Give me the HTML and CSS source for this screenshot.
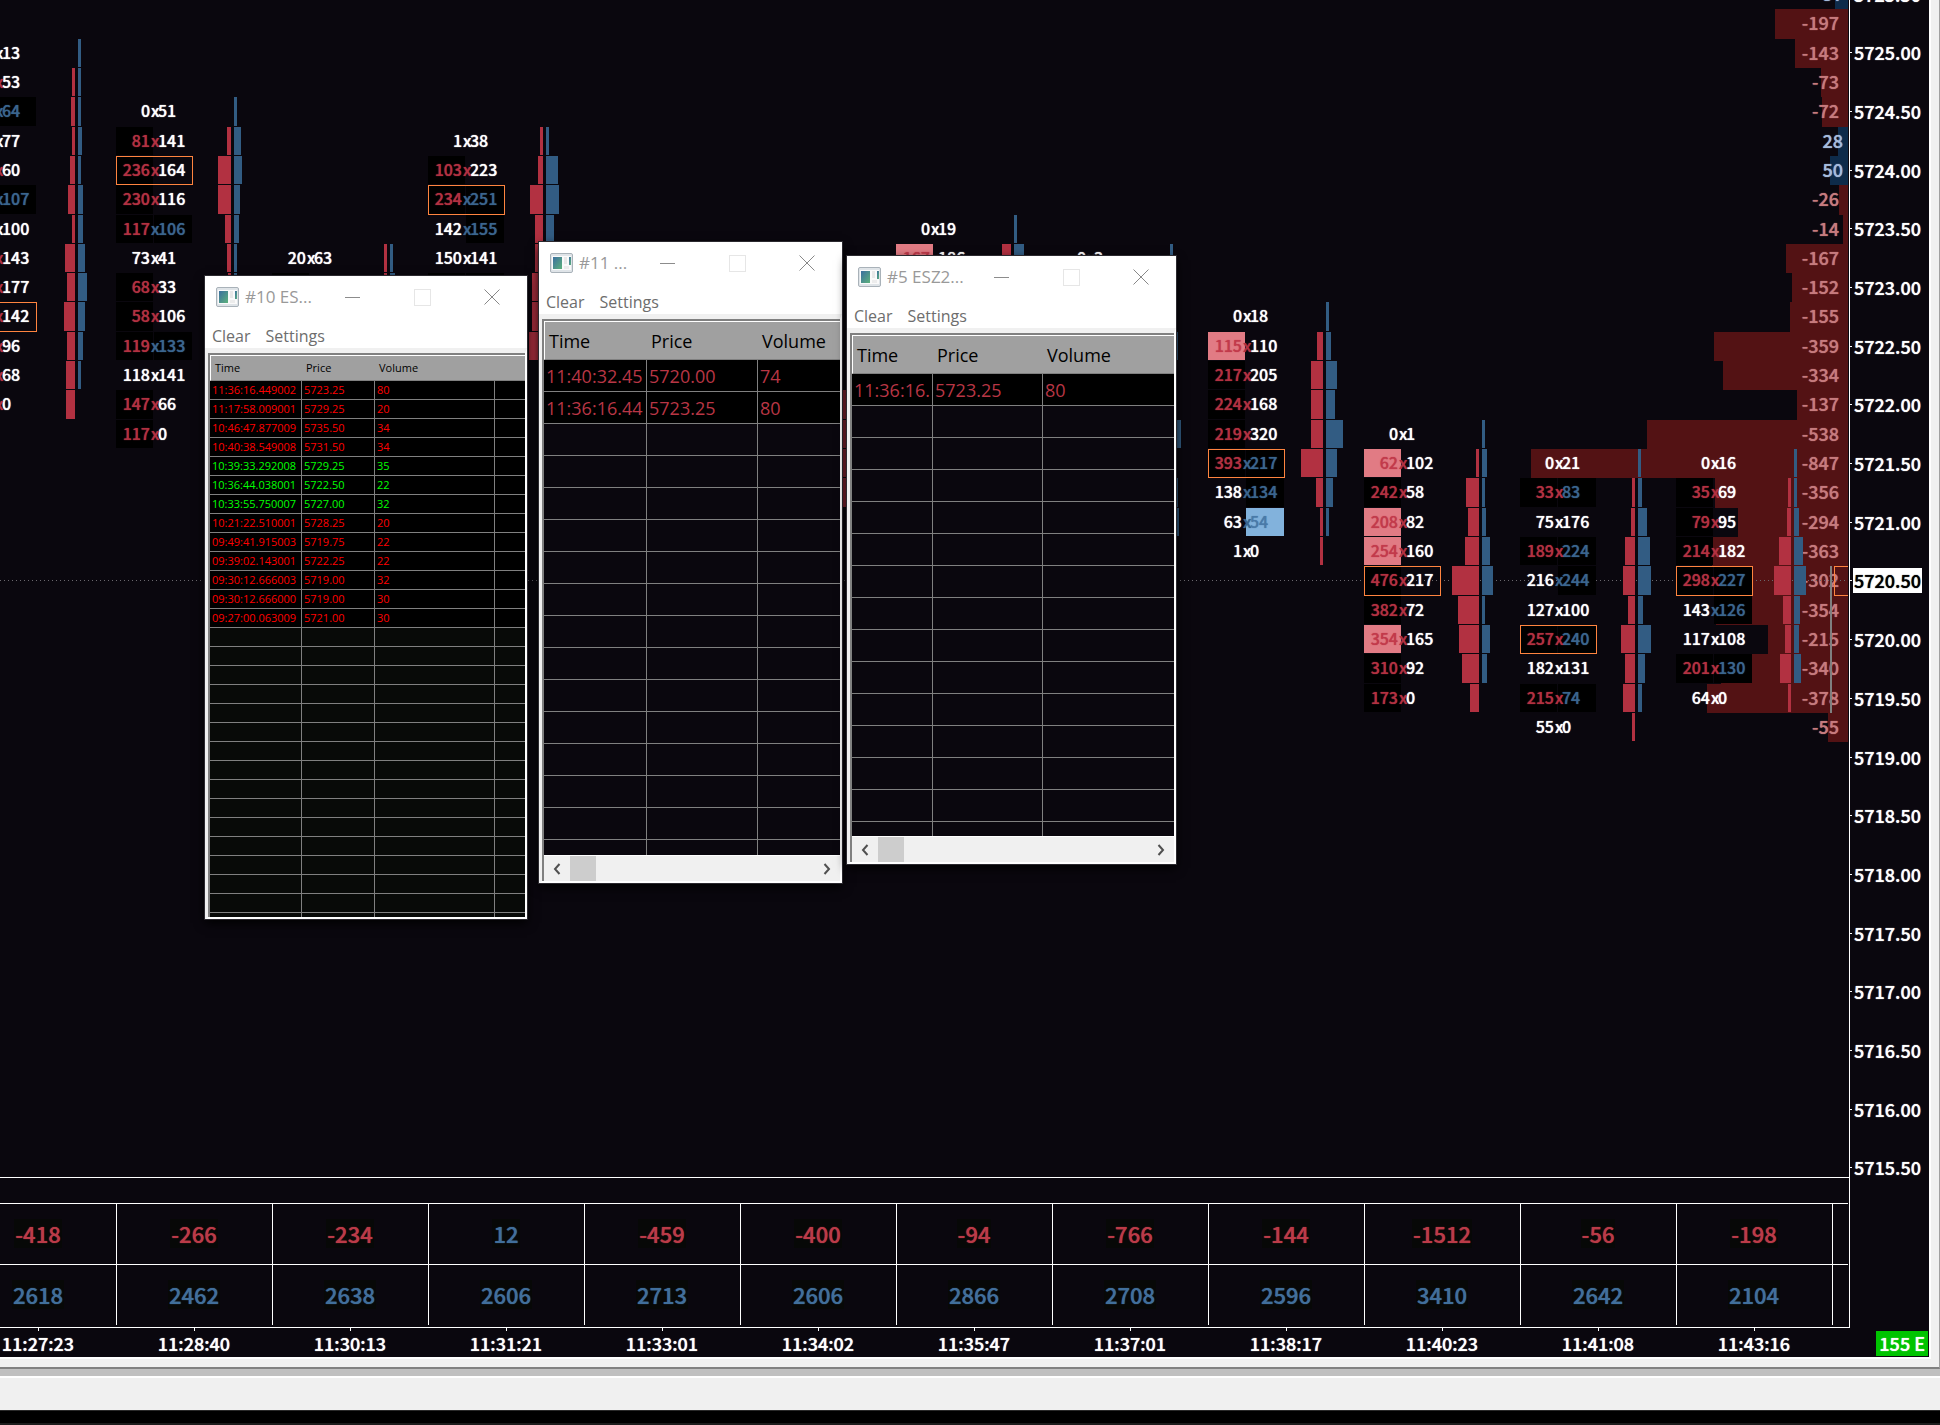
FILE: index.html
```html
<!DOCTYPE html>
<html lang="en">
<head>
<meta charset="utf-8">
<title>ES footprint chart</title>
<link rel="stylesheet" href="styles.css">
</head>
<body>
<main class="workspace">
  <section class="chart">
    <div class="plot">
      <div class="levels profile" id="profile"></div>
      <div class="levels last-price"><span class="last-line"></span></div>
      <div class="clusters" id="clusters"></div>
      <div class="levels current-bar"><span class="current-box"></span><span class="current-range"></span></div>

      <article class="window window-10">
        <header class="titlebar">
          <svg class="app-icon" viewBox="0 0 23 20" aria-hidden="true"><rect x=".5" y=".5" width="22" height="19" rx="1.5" fill="#dfe4e8" stroke="#a9b2b9"/><rect x="2" y="3" width="19" height="14" fill="#fafafa"/><rect x="3" y="4" width="9" height="12" fill="url(#tile)"/><rect x="14" y="4" width="3" height="7" fill="#e8e8e8"/><rect x="19" y="4" width="2" height="8" fill="url(#tile)"/><rect x="14" y="13" width="5" height="3" fill="#ececec"/><defs><linearGradient id="tile" x1="0" y1="0" x2="1" y2="1"><stop stop-color="#3c6fa0"/><stop offset="1" stop-color="#5db27c"/></linearGradient></defs></svg>
          <h2 class="title">#10 ES...</h2>
          <div class="controls">
            <button class="control minimize" aria-label="Minimize"></button>
            <button class="control maximize" aria-label="Maximize" disabled></button>
            <button class="control close" aria-label="Close"><svg viewBox="0 0 16 16" aria-hidden="true"><path d="M.5 .5 15.5 15.5M15.5 .5 .5 15.5"/></svg></button>
          </div>
        </header>
        <nav class="menu"><button>Clear</button><button>Settings</button></nav>
        <div class="sheet">
          <table class="trades small" data-blank="16">
            <colgroup><col class="w92"><col class="w73"><col class="w120"><col></colgroup>
            <thead><tr><th>Time</th><th>Price</th><th>Volume</th><th></th></tr></thead>
            <tbody>
              <tr class="sell"><td>11:36:16.449002</td><td>5723.25</td><td>80</td><td></td></tr>
              <tr class="sell"><td>11:17:58.009001</td><td>5729.25</td><td>20</td><td></td></tr>
              <tr class="sell"><td>10:46:47.877009</td><td>5735.50</td><td>34</td><td></td></tr>
              <tr class="sell"><td>10:40:38.549008</td><td>5731.50</td><td>34</td><td></td></tr>
              <tr class="buy"><td>10:39:33.292008</td><td>5729.25</td><td>35</td><td></td></tr>
              <tr class="buy"><td>10:36:44.038001</td><td>5722.50</td><td>22</td><td></td></tr>
              <tr class="buy"><td>10:33:55.750007</td><td>5727.00</td><td>32</td><td></td></tr>
              <tr class="sell"><td>10:21:22.510001</td><td>5728.25</td><td>20</td><td></td></tr>
              <tr class="sell"><td>09:49:41.915003</td><td>5719.75</td><td>22</td><td></td></tr>
              <tr class="sell"><td>09:39:02.143001</td><td>5722.25</td><td>22</td><td></td></tr>
              <tr class="sell"><td>09:30:12.666003</td><td>5719.00</td><td>32</td><td></td></tr>
              <tr class="sell"><td>09:30:12.666000</td><td>5719.00</td><td>30</td><td></td></tr>
              <tr class="sell"><td>09:27:00.063009</td><td>5721.00</td><td>30</td><td></td></tr>
            </tbody>
          </table>
        </div>
      </article>

      <article class="window window-11">
        <header class="titlebar">
          <svg class="app-icon" viewBox="0 0 23 20" aria-hidden="true"><rect x=".5" y=".5" width="22" height="19" rx="1.5" fill="#dfe4e8" stroke="#a9b2b9"/><rect x="2" y="3" width="19" height="14" fill="#fafafa"/><rect x="3" y="4" width="9" height="12" fill="url(#tile)"/><rect x="14" y="4" width="3" height="7" fill="#e8e8e8"/><rect x="19" y="4" width="2" height="8" fill="url(#tile)"/><rect x="14" y="13" width="5" height="3" fill="#ececec"/></svg>
          <h2 class="title">#11 ...</h2>
          <div class="controls">
            <button class="control minimize" aria-label="Minimize"></button>
            <button class="control maximize" aria-label="Maximize" disabled></button>
            <button class="control close" aria-label="Close"><svg viewBox="0 0 16 16" aria-hidden="true"><path d="M.5 .5 15.5 15.5M15.5 .5 .5 15.5"/></svg></button>
          </div>
        </header>
        <nav class="menu"><button>Clear</button><button>Settings</button></nav>
        <div class="sheet">
          <table class="trades" data-blank="14">
            <colgroup><col class="w103"><col class="w111"><col></colgroup>
            <thead><tr><th>Time</th><th>Price</th><th>Volume</th></tr></thead>
            <tbody>
              <tr class="sell"><td>11:40:32.45</td><td>5720.00</td><td>74</td></tr>
              <tr class="sell"><td>11:36:16.44</td><td>5723.25</td><td>80</td></tr>
            </tbody>
          </table>
          <div class="scrollbar">
            <button class="arrow" aria-label="Scroll left"><svg viewBox="0 0 8 12" aria-hidden="true"><path d="M6.500 1 2 6 6.500 11"/></svg></button>
            <span class="thumb"></span>
            <button class="arrow" aria-label="Scroll right"><svg viewBox="0 0 8 12" aria-hidden="true"><path d="M1.500 1 6 6 1.500 11"/></svg></button>
          </div>
        </div>
      </article>

      <article class="window window-5">
        <header class="titlebar">
          <svg class="app-icon" viewBox="0 0 23 20" aria-hidden="true"><rect x=".5" y=".5" width="22" height="19" rx="1.5" fill="#dfe4e8" stroke="#a9b2b9"/><rect x="2" y="3" width="19" height="14" fill="#fafafa"/><rect x="3" y="4" width="9" height="12" fill="url(#tile)"/><rect x="14" y="4" width="3" height="7" fill="#e8e8e8"/><rect x="19" y="4" width="2" height="8" fill="url(#tile)"/><rect x="14" y="13" width="5" height="3" fill="#ececec"/></svg>
          <h2 class="title">#5 ESZ2...</h2>
          <div class="controls">
            <button class="control minimize" aria-label="Minimize"></button>
            <button class="control maximize" aria-label="Maximize" disabled></button>
            <button class="control close" aria-label="Close"><svg viewBox="0 0 16 16" aria-hidden="true"><path d="M.5 .5 15.5 15.5M15.5 .5 .5 15.5"/></svg></button>
          </div>
        </header>
        <nav class="menu"><button>Clear</button><button>Settings</button></nav>
        <div class="sheet">
          <table class="trades" data-blank="14">
            <colgroup><col class="w81"><col class="w110"><col></colgroup>
            <thead><tr><th>Time</th><th>Price</th><th>Volume</th></tr></thead>
            <tbody>
              <tr class="sell"><td>11:36:16.</td><td>5723.25</td><td>80</td></tr>
            </tbody>
          </table>
          <div class="scrollbar">
            <button class="arrow" aria-label="Scroll left"><svg viewBox="0 0 8 12" aria-hidden="true"><path d="M6.500 1 2 6 6.500 11"/></svg></button>
            <span class="thumb"></span>
            <button class="arrow" aria-label="Scroll right"><svg viewBox="0 0 8 12" aria-hidden="true"><path d="M1.500 1 6 6 1.500 11"/></svg></button>
          </div>
        </div>
      </article>
    </div>

    <div class="axis"><div class="levels prices" id="prices"></div></div>

    <div class="summary">
      <table class="totals">
        <tbody>
          <tr class="delta"><td><span>-418</span></td><td><span>-266</span></td><td><span>-234</span></td><td><span class="up">12</span></td><td><span>-459</span></td><td><span>-400</span></td><td><span>-94</span></td><td><span>-766</span></td><td><span>-144</span></td><td><span>-1512</span></td><td><span>-56</span></td><td><span>-198</span></td><td class="tail"></td></tr>
          <tr class="volume"><td><span>2618</span></td><td><span>2462</span></td><td><span>2638</span></td><td><span>2606</span></td><td><span>2713</span></td><td><span>2606</span></td><td><span>2866</span></td><td><span>2708</span></td><td><span>2596</span></td><td><span>3410</span></td><td><span>2642</span></td><td><span>2104</span></td><td class="tail"></td></tr>
        </tbody>
      </table>
    </div>

    <div class="times">
      <time>11:27:23</time><time>11:28:40</time><time>11:30:13</time><time>11:31:21</time><time>11:33:01</time><time>11:34:02</time><time>11:35:47</time><time>11:37:01</time><time>11:38:17</time><time>11:40:23</time><time>11:41:08</time><time>11:43:16</time>
    </div>
    <div class="corner"><span class="badge">155 E</span></div>
  </section>
</main>
<div class="divider"></div>
<footer class="statusbar"></footer>
<div class="desktop-edge"></div>
<script src="chart.js"></script>
</body>
</html>
```
FILE: styles.css
```css
:root {
  --bg: #0a070e;
  --red: #b23141;
  --blue: #325c83;
  --orange: #ff843f;
  --num: "Noto Sans CJK JP Medium", "Noto Sans CJK JP", "Liberation Sans", sans-serif;
  --ui: "Open Sans", "Noto Sans", sans-serif;
}

* { box-sizing: border-box; }

body {
  margin: 0;
  min-height: 100vh;
  display: flex;
  flex-direction: column;
  background: #000;
  color: #fff;
  font-family: var(--num);
  font-weight: 500;
}

button {
  padding: 0;
  border: 0;
  background: none;
  font: inherit;
  color: inherit;
}

.workspace {
  flex: 1;
  display: flex;
  padding: 0 8px 8px 0;
  background: #f0f0f0;
  border-right: 1px solid #a0a0a0;
  border-bottom: 2px solid #808080;
}

.chart {
  flex: 1;
  min-width: 0;
  display: grid;
  grid-template-columns: minmax(0, 1fr) 79px;
  grid-template-rows: minmax(0, 1fr) 150px 29px;
  background: var(--bg);
  border-right: 2px solid #fff;
  border-bottom: 2px solid #fff;
}

.plot {
  position: relative;
  overflow: hidden;
  border-right: 1px solid #fff;
  border-bottom: 1px solid #fff;
}

/* 41 price levels; the first and last are partly cut by the pane */
.levels {
  position: absolute;
  top: -20px;
  bottom: -5px;
  left: 0;
  right: 1px;
  display: grid;
  grid-template-rows: repeat(41, minmax(0, 1fr));
}

.profile-bar {
  grid-column: 1;
  justify-self: end;
  background: #531214;
}
.profile-bar.up { background: #0e2b4a; }
.profile-value {
  grid-column: 1;
  justify-self: end;
  padding-right: 9px;
  color: #c67b7e;
  font-size: 18px;
  line-height: 27px;
  text-shadow: 0 0 1px currentColor;
}
.profile-value.up { padding-right: 5px; color: #a5bbdc; }

.last-line {
  grid-row: 21;
  align-self: center;
  height: 1px;
  background: repeating-linear-gradient(90deg, #6b686e 0 1px, transparent 1px 4px);
}

.clusters {
  position: absolute;
  top: -20px;
  bottom: -5px;
  left: 0;
  right: 17px;
  display: flex;
  justify-content: flex-end;
}
.cluster {
  flex: none;
  width: 156px;
  display: grid;
  grid-template-rows: repeat(41, minmax(0, 1fr));
}
.level {
  display: grid;
  grid-template-columns: 77px 38px 3px 38px;
}
.pair {
  position: relative;
  display: grid;
  grid-template-columns: 37px 38px;
  column-gap: 1px;
  font-size: 16px;
  line-height: 26px;
  text-shadow: 0 0 1px currentColor;
}
.bid, .ask { height: calc(100% - 1px); white-space: nowrap; }
.bid { padding-right: 3px; text-align: right; }
.ask { padding-left: 4px; }
.by {
  position: absolute;
  left: 35px;
  width: 8px;
  text-align: center;
}
.bid.hot, .by.red { color: var(--red); }
.ask.hot, .by.blue { color: #3a658e; }
.hot { background: #000; }
.bid.imbalance { background: #e17b84; color: #c23a4b; }
.ask.imbalance { background: #82b2dc; color: #4a7aa8; }
.pair.poc { outline: 1px solid var(--orange); outline-offset: -1px; }

.bar { height: calc(100% - 1px); }
.bar.sell { grid-column: 2; justify-self: end; background: var(--red); }
.bar.buy { grid-column: 4; background: var(--blue); }

.current-box {
  grid-row: 21;
  grid-column: 1;
  justify-self: end;
  width: 14px;
  border: 1px solid var(--orange);
  border-right: 0;
}
.current-range {
  grid-row: 21 / span 5;
  grid-column: 1;
  justify-self: end;
  width: 2px;
  margin-right: 16px;
  background: #808080;
}

.axis { position: relative; overflow: hidden; }
.price {
  display: flex;
  align-items: center;
  gap: 1px;
  font-size: 18px;
  line-height: 25px;
  padding-bottom: 1px;
  text-shadow: 0 0 1px currentColor;
}
.price::before { content: ""; width: 2px; height: 1px; background: #fff; }
.price span { padding: 0 1px; }
.price.current span { background: #fff; color: #000; }

.summary {
  grid-column: 1;
  grid-row: 2;
  display: flex;
  justify-content: flex-end;
  overflow: hidden;
  padding: 25px 1px 0 0;
  border-right: 1px solid #fff;
  border-bottom: 1px solid #fff;
}
.totals {
  flex: none;
  width: 1888px;
  height: 122px;
  table-layout: fixed;
  border-collapse: separate;
  border-spacing: 0;
}
.totals td {
  width: 156px;
  height: 61px;
  padding: 0 1px 2px 0;
  border-top: 1px solid #fff;
  border-left: 1px solid #fff;
  text-align: center;
  font-size: 22px;
  line-height: 29px;
  text-shadow: 0 0 1px currentColor;
}
.totals td.tail { width: 16px; }
.totals span { display: inline-block; padding: 0 1px; background: #070807; }
.delta { color: #bb3b48; }
.volume, .delta .up { color: #416f9b; }

.times {
  grid-column: 1;
  grid-row: 3;
  display: flex;
  justify-content: flex-end;
  overflow: hidden;
  padding-right: 18px;
}
.times time {
  flex: none;
  width: 156px;
  display: flex;
  flex-direction: column;
  align-items: center;
  font-size: 18px;
  line-height: 24px;
  text-shadow: 0 0 1px currentColor;
}
.times time::before { content: ""; width: 1px; height: 3px; background: #fff; }

.corner {
  grid-column: 2;
  grid-row: 3;
  display: flex;
  justify-content: flex-end;
  align-items: flex-end;
  padding: 0 1px 1px 0;
}
.badge {
  width: 52px;
  padding-right: 3px;
  background: #00c400;
  font-size: 18px;
  line-height: 25px;
  text-align: right;
  white-space: nowrap;
  text-shadow: 0 0 1px currentColor;
}

/* Floating windows */
.window {
  position: absolute;
  display: flex;
  flex-direction: column;
  background: #fff;
  box-shadow: 0 0 0 1px #2b292f, 0 4px 10px #000;
  font-family: var(--ui);
  font-weight: 400;
}
.window-10 { left: 205px; top: 276px; width: 322px; height: 643px; }
.window-11 { left: 539px; top: 242px; width: 303px; height: 641px; }
.window-5 { left: 847px; top: 256px; width: 329px; height: 608px; }

.titlebar {
  height: 42px;
  display: flex;
  align-items: center;
  padding-left: 11px;
}
.app-icon { flex: none; width: 23px; height: 20px; margin-right: 6px; }
.title {
  flex: 1;
  min-width: 0;
  margin: 0;
  color: #999;
  font-size: 17px;
  font-weight: 400;
  line-height: 24px;
  white-space: nowrap;
}
.controls { flex: none; display: flex; }
.control {
  width: 70px;
  height: 42px;
  display: flex;
  align-items: center;
  justify-content: center;
}
.minimize::before { content: ""; width: 15px; height: 1px; background: #8c8c8c; }
.maximize::before { content: ""; width: 15px; height: 15px; border: 1px solid #e6e6e6; }
.close svg { width: 16px; height: 16px; fill: none; stroke: #888; stroke-width: 1; }

.menu {
  height: 30px;
  display: flex;
  gap: 15px;
  padding: 6px 0 0 7px;
  color: #6d6d6d;
  font-size: 16px;
  line-height: 24px;
}

.sheet {
  flex: 1;
  min-height: 0;
  position: relative;
  overflow: hidden;
  padding: 2px 0 0 2px;
  border: 2px solid #fff;
  border-top: 5px solid #f0f0f0;
  border-left: 3px solid #f0f0f0;
  background: #808080;
}
.trades {
  width: 100%;
  table-layout: fixed;
  border-collapse: separate;
  border-spacing: 0;
  color: #b83645;
  font-size: 18px;
  line-height: 29px;
}
.w73 { width: 73px; }
.w81 { width: 81px; }
.w92 { width: 92px; }
.w103 { width: 103px; }
.w110 { width: 110px; }
.w111 { width: 111px; }
.w120 { width: 120px; }
.trades th {
  height: 39px;
  padding: 2px 0 0 4px;
  border-top: 1px solid #fff;
  border-bottom: 1px solid #808080;
  background: #a0a0a0;
  color: #000;
  font-weight: 400;
  text-align: left;
}
.trades th:first-child { border-left: 1px solid #fff; }
.trades td {
  height: 32px;
  padding: 2px 0 0 2px;
  overflow: hidden;
  border-right: 1px solid #808080;
  border-bottom: 1px solid #808080;
  background: #000;
  white-space: nowrap;
}
.trades td:last-child { border-right: 0; }
.trades .blank td { background: var(--bg); }
.trades.small { font-size: 11px; line-height: 18px; }
.small th { height: 26px; padding-top: 0; }
.small td { height: 19px; padding-top: 0; }
.small .sell { color: #f00; }
.small .buy { color: #0f0; }
.small .blank td { background: #080a08; }

.scrollbar {
  position: absolute;
  left: 2px;
  right: 0;
  bottom: 0;
  height: 26px;
  display: flex;
  background: #f0f0f0;
  border-top: 1px solid #fff;
}
.arrow { width: 26px; display: grid; place-items: center; }
.arrow:last-child { margin-left: auto; }
.arrow svg { width: 8px; height: 12px; fill: none; stroke: #505050; stroke-width: 2; }
.thumb { width: 26px; background: #cdcdcd; }

.divider { height: 9px; background: #c0c0c0; border-bottom: 2px solid #fff; }
.statusbar { height: 32px; background: #f0f0f0; }
.desktop-edge { height: 15px; background: #000; border-top: 1px solid #2a2a2a; border-bottom: 2px solid #1c1c1c; }
```
FILE: chart.js
```js
// Each level is "bid x ask": r/b = highlighted side, p/l = imbalance fill, * = point of control.
const clusters = [
  { top: 2, levels: '0x13 55rx53 75rx64b 55x77 95rx60 130rx107b 60x100 182rx143 145rx177 200rx142* 145rx96 160rx68 160rx0' },
  { top: 4, levels: '0x51 81rx141 236rx164* 230rx116 117rx106b 73x41 68rx33 58rx106 119rx133b 118x141 147rx66 117rx0' },
  { top: 9, levels: '20x63 70rx100' },
  { top: 5, levels: '1x38 103rx223 234rx251b* 142x155b 150x141 200rx160b 200rx120 255rx140' },
  { top: 5, levels: '' },
  { top: 14, levels: '240rx90 240rx90 240rx90 240rx90' },
  { top: 8, levels: '0x19 167px186' },
  { top: 9, levels: '0x3 - - 40x150 - - 40x205 - 40x150 40x170' },
  { top: 11, levels: '0x18 115px110 217rx205 224rx168 219rx320 393rx217b* 138x134b 63x54l 1x0' },
  { top: 15, levels: '0x1 62px102 242rx58 208px82 254px160 476rx217* 382rx72 354px165 310rx92 173rx0' },
  { top: 16, levels: '0x21 33rx83b 75x176 189rx224b 216x244b 127x100 257rx240b* 182x131 215rx74b 55x0' },
  { top: 16, levels: '0x16 35rx69 79rx95 214rx182 298rx227b* 143x126b 117x108 201rx130b 64x0' }
];
const profile = [37, -197, -143, -73, -72, 28, 50, -26, -14, -167, -152, -155, -359, -334,
  -137, -538, -847, -356, -294, -363, -302, -354, -215, -340, -378, -55];

function add(parent, tag, className, text) {
  const node = document.createElement(tag);
  if (className) node.className = className;
  if (text !== undefined) node.textContent = text;
  parent.append(node);
  return node;
}

function addBar(level, side, volume, scale) {
  if (volume > 0) add(level, 'span', 'bar ' + side).style.width = Math.max(3, Math.floor(volume * scale)) + 'px';
}

const clusterRoot = document.getElementById('clusters');
clusters.forEach((cluster, index) => {
  const column = add(clusterRoot, 'div', 'cluster');
  cluster.levels.split(' ').forEach((text, i) => {
    const m = /^(\d+)([rp]?)x(\d+)([bl]?)(\*?)$/.exec(text);
    if (!m) return;
    const [, bid, bidMark, ask, askMark, poc] = m;
    const level = add(column, 'div', 'level');
    level.style.gridRow = cluster.top + i + 1;
    const pair = add(level, 'div', 'pair' + (poc ? ' poc' : ''));
    const mark = m => (m ? ' hot' : '') + (m === 'p' || m === 'l' ? ' imbalance' : '');
    add(pair, 'span', 'bid' + mark(bidMark), bid);
    const tone = askMark && (!bidMark || index < 9) ? ' blue' : bidMark ? ' red' : '';
    add(pair, 'span', 'by' + tone, 'x');
    add(pair, 'span', 'ask' + mark(askMark), ask);
    addBar(level, 'sell', +bid, 0.0571);
    addBar(level, 'buy', +ask, 0.0545);
  });
});

const profileRoot = document.getElementById('profile');
profile.forEach((value, i) => {
  const up = value > 0 ? ' up' : '';
  const bar = add(profileRoot, 'span', 'profile-bar' + up);
  bar.style.gridRow = i + 1;
  bar.style.width = Math.floor(Math.abs(value) * 0.3748) + 'px';
  add(profileRoot, 'span', 'profile-value' + up, value).style.gridRow = i + 1;
});

const priceRoot = document.getElementById('prices');
for (let i = 0; i <= 40; i += 2) {
  const price = (5725.5 - i / 4).toFixed(2);
  const label = add(priceRoot, 'div', 'price' + (price === '5720.50' ? ' current' : ''));
  label.style.gridRow = i + 1;
  add(label, 'span', '', price);
}

document.querySelectorAll('.trades').forEach(table => {
  const columns = table.tHead.rows[0].cells.length;
  for (let i = 0; i < +table.dataset.blank; i++) {
    const row = add(table.tBodies[0], 'tr', 'blank');
    for (let c = 0; c < columns; c++) add(row, 'td');
  }
});
```
